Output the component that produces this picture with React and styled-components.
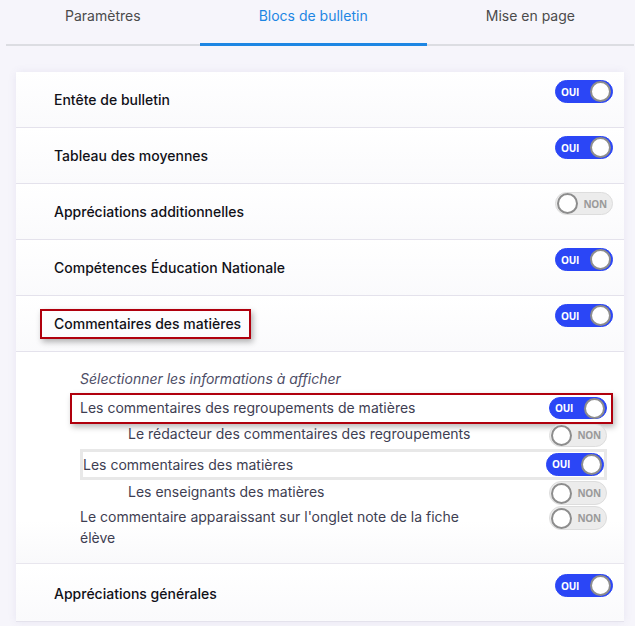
import React from "react";
import styled, { createGlobalStyle } from "styled-components";

const GlobalStyle = createGlobalStyle`
  html, body {
    margin: 0;
    padding: 0;
    background: #f6f5fb;
    font-family: Inter, "Noto Sans", sans-serif;
    overflow: hidden;
  }
`;

const Page = styled.div`
  padding: 0 1px 0 6px;
  height: 626px;
`;

const Tabs = styled.nav`
  display: flex;
  border-bottom: 2px solid #dcdde2;
`;

const Tab = styled.div`
  flex: 1 1 auto;
  text-align: center;
  font-size: 14px;
  line-height: 18px;
  padding: 7px 0 18px;
  margin-bottom: -2px;
  color: ${(p) => (p.$active ? "#1d86e3" : "#4b4b4b")};
  border-bottom: 3px solid ${(p) => (p.$active ? "#1d86e3" : "transparent")};
  box-sizing: border-box;
`;

const Card = styled.section`
  margin: 26px 10px 0 10px;
  background: #fff;
  border-radius: 4px 4px 0 0;
  box-shadow: 0 0 8px rgba(110, 100, 170, 0.1);
`;

const Row = styled.div`
  display: flex;
  justify-content: space-between;
  align-items: flex-start;
  height: 55px;
  padding: 0 11px 0 38px;
  border-bottom: 1px solid #e4e2ec;
  background: linear-gradient(#ffffff, #fafafc);
`;

const Label = styled.span`
  padding-top: 19px;
  font-size: 14px;
  line-height: 18px;
  font-weight: 450;
  color: #111118;
`;

const Marked = styled.span`
  margin: 13px 0 0 -14px;
  padding: 4px 8px 4px 12px;
  border: 2px solid #b0000d;
  box-shadow: 2px 3px 6px rgba(0, 0, 0, 0.3);
  font-size: 14px;
  line-height: 18px;
  font-weight: 450;
  color: #111118;
`;

const Details = styled.div`
  display: flex;
  flex-direction: column;
  padding: 17px 17px 15px 64px;
  margin-bottom: 2px;
  border-bottom: 1px solid #e8e6ee;
  background: linear-gradient(#ffffff 80%, #f9f9fb);
`;

const Hint = styled.div`
  font-size: 14px;
  line-height: 20px;
  font-style: italic;
  color: #4d4d66;
  margin-bottom: 5px;
`;

const SubRow = styled.div`
  position: relative;
  display: flex;
  justify-content: space-between;
  align-items: ${(p) => (p.$top ? "flex-start" : "center")};
  height: ${(p) => p.$h}px;
  padding-left: ${(p) => (p.$indent ? 48 : 0)}px;
  font-size: 14px;
  line-height: 21px;
  color: #3e3e52;

  ${(p) =>
    p.$marked &&
    `
    &::before {
      content: "";
      position: absolute;
      inset: -1px -6px -2px -10px;
      border: 2px solid #b0000d;
      box-shadow: 2px 3px 6px rgba(0, 0, 0, 0.28);
      pointer-events: none;
    }
  `}
`;

const FramedRow = styled(SubRow)`
  border: 3px solid #e8e8e8;
  padding-left: 0;
  box-sizing: border-box;
`;

const SubText = styled.span`
  max-width: ${(p) => p.$max || 460}px;
  margin-top: ${(p) => p.$mt || 0}px;
`;

const Switch = styled.span`
  position: relative;
  flex: none;
  display: flex;
  align-items: center;
  justify-content: ${(p) => (p.$on ? "flex-start" : "flex-end")};
  box-sizing: border-box;
  width: 58px;
  height: ${(p) => p.$h || 23}px;
  margin-top: ${(p) => p.$mt || 0}px;
  padding: ${(p) => (p.$on ? "0 0 0 5px" : "0 5px 0 0")};
  border-radius: 12px;
  background: ${(p) => (p.$on ? "#2b46f6" : "#ececec")};
  border: 1px solid ${(p) => (p.$on ? "#2b46f6" : "#dddddd")};
  font-family: "Open Sans", "Liberation Sans", sans-serif;
  font-size: 10px;
  font-weight: 700;
  letter-spacing: -0.2px;
  color: ${(p) => (p.$on ? "#ffffff" : "#9a9a9a")};

  &::after {
    content: "";
    position: absolute;
    top: 50%;
    ${(p) => (p.$on ? "right: 1px;" : "left: 1px;")}
    width: 17px;
    height: 17px;
    margin-top: -10.5px;
    border-radius: 50%;
    background: #fff;
    border: 2px solid #8d8d8d;
  }
`;

const Toggle = ({ on, mt, h }) => (
  <Switch $on={on} $mt={mt} $h={h}>
    {on ? "OUI" : "NON"}
  </Switch>
);

const blocks = [
  { label: "Entête de bulletin", on: true },
  { label: "Tableau des moyennes", on: true },
  { label: "Appréciations additionnelles", on: false },
  { label: "Compétences Éducation Nationale", on: true },
];

export default function App() {
  return (
    <Page>
      <GlobalStyle />
      <Tabs>
        <Tab>Paramètres</Tab>
        <Tab $active>Blocs de bulletin</Tab>
        <Tab>Mise en page</Tab>
      </Tabs>
      <Card>
        {blocks.map((b) => (
          <Row key={b.label}>
            <Label>{b.label}</Label>
            <Toggle on={b.on} mt={8} />
          </Row>
        ))}
        <Row>
          <Marked>Commentaires des matières</Marked>
          <Toggle on mt={8} />
        </Row>
        <Details>
          <Hint>Sélectionner les informations à afficher</Hint>
          <SubRow $h={28} $marked>
            <SubText $mt={-2}>Les commentaires des regroupements de matières</SubText>
            <Toggle on h={22} />
          </SubRow>
          <SubRow $h={27} $indent>
            <SubText $mt={-5}>Le rédacteur des commentaires des regroupements</SubText>
            <Toggle on={false} />
          </SubRow>
          <FramedRow $h={31}>
            <SubText>Les commentaires des matières</SubText>
            <Toggle on />
          </FramedRow>
          <SubRow $h={26} $indent>
            <SubText $mt={-3}>Les enseignants des matières</SubText>
            <Toggle on={false} h={24} />
          </SubRow>
          <SubRow $h={42} $top>
            <SubText $max={400}>
              Le commentaire apparaissant sur l'onglet note de la fiche élève
            </SubText>
            <Toggle on={false} h={24} />
          </SubRow>
        </Details>
        <Row>
          <Label>Appréciations générales</Label>
          <Toggle on mt={8} />
        </Row>
      </Card>
    </Page>
  );
}
